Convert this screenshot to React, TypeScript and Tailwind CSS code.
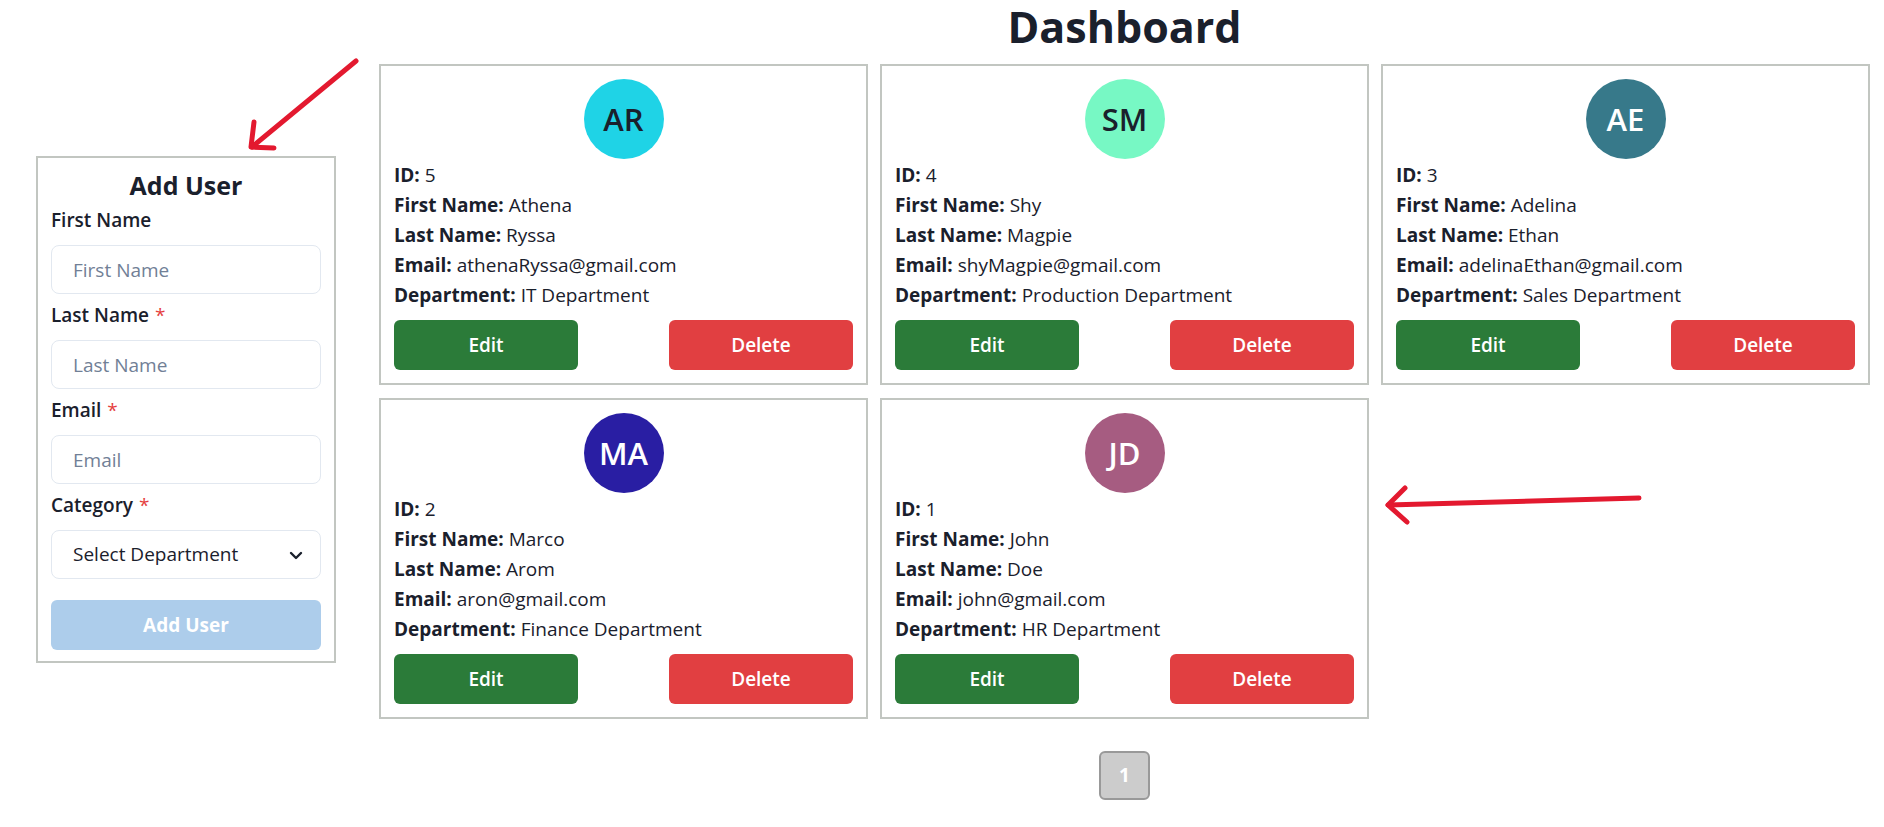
import React from 'react';

type User = {
  id: number;
  firstName: string;
  lastName: string;
  email: string;
  department: string;
  avatarBg: string;
  avatarText: string;
};

const users: User[] = [
  { id: 5, firstName: 'Athena', lastName: 'Ryssa', email: 'athenaRyssa@gmail.com', department: 'IT Department', avatarBg: 'bg-[#1fd3e6]', avatarText: 'text-[#1a202c]' },
  { id: 4, firstName: 'Shy', lastName: 'Magpie', email: 'shyMagpie@gmail.com', department: 'Production Department', avatarBg: 'bg-[#77f8c4]', avatarText: 'text-[#1a202c]' },
  { id: 3, firstName: 'Adelina', lastName: 'Ethan', email: 'adelinaEthan@gmail.com', department: 'Sales Department', avatarBg: 'bg-[#37798a]', avatarText: 'text-white' },
  { id: 2, firstName: 'Marco', lastName: 'Arom', email: 'aron@gmail.com', department: 'Finance Department', avatarBg: 'bg-[#291ea3]', avatarText: 'text-white' },
  { id: 1, firstName: 'John', lastName: 'Doe', email: 'john@gmail.com', department: 'HR Department', avatarBg: 'bg-[#a65c81]', avatarText: 'text-white' },
];

function Field({ label, placeholder, required }: { label: string; placeholder: string; required?: boolean }) {
  return (
    <div className="flex flex-col">
      <label className="text-[19px] leading-[29px] font-semibold mb-[10px]">
        {label}
        {required && <span className="text-[#e53e3e] font-normal ml-[6px]">*</span>}
      </label>
      <input
        placeholder={placeholder}
        className="h-[49px] w-full rounded-lg border border-[#e2e8f0] pl-[21px] text-[19px] placeholder:text-[#718096] outline-none"
      />
    </div>
  );
}

function AddUserForm() {
  return (
    <div className="w-[300px] mt-[156px] border-2 border-[#c2c6c1] px-[13px] pt-[12px] pb-[11px] shrink-0">
      <h2 className="text-center text-[25px] leading-[30px] font-bold mb-[6px]">Add User</h2>
      <div className="flex flex-col gap-[7px]">
        <Field label="First Name" placeholder="First Name" />
        <Field label="Last Name" placeholder="Last Name" required />
        <Field label="Email" placeholder="Email" required />
        <div className="flex flex-col">
          <label className="text-[19px] leading-[29px] font-semibold mb-[10px]">
            Category<span className="text-[#e53e3e] font-normal ml-[6px]">*</span>
          </label>
          <div className="relative">
            <select className="h-[49px] w-full appearance-none rounded-lg border border-[#e2e8f0] bg-white pl-[21px] text-[19px] text-[#1a202c] outline-none">
              <option>Select Department</option>
            </select>
            <svg className="absolute right-[18px] top-[21px] pointer-events-none" width="14" height="9" viewBox="0 0 14 9" fill="none">
              <path d="M2 2l5 5 5-5" stroke="#1a202c" strokeWidth="2.4" strokeLinecap="round" strokeLinejoin="round" />
            </svg>
          </div>
        </div>
      </div>
      <button className="mt-[21px] h-[50px] w-full rounded-md bg-[#adcdeb] text-white text-[19px] font-bold">
        Add User
      </button>
    </div>
  );
}

function UserCard({ user }: { user: User }) {
  const initials = user.firstName[0] + user.lastName[0];
  return (
    <div className="border-2 border-[#c2c6c1] p-[13px] flex flex-col">
      <div className="flex justify-center">
        <div className={`w-[80px] h-[80px] rounded-full flex items-center justify-center text-[31px] font-semibold ${user.avatarBg} ${user.avatarText}`}>
          {initials}
        </div>
      </div>
      <div className="text-[19px] leading-[30px] mt-[1px]">
        <p><b className="font-bold">ID:</b> {user.id}</p>
        <p><b className="font-bold">First Name:</b> {user.firstName}</p>
        <p><b className="font-bold">Last Name:</b> {user.lastName}</p>
        <p><b className="font-bold">Email:</b> {user.email}</p>
        <p><b className="font-bold">Department:</b> {user.department}</p>
      </div>
      <div className="flex justify-between mt-[10px]">
        <button className="w-[184px] h-[50px] rounded-md bg-[#2b7b39] text-white text-[19px] font-semibold">Edit</button>
        <button className="w-[184px] h-[50px] rounded-md bg-[#e13f41] text-white text-[19px] font-semibold">Delete</button>
      </div>
    </div>
  );
}

export default function App() {
  return (
    <div className="relative min-h-[827px] bg-white text-[#1a202c]" style={{ fontFamily: '"Open Sans", "Noto Sans", sans-serif' }}>
      <div className="flex items-start pl-[36px]">
        <AddUserForm />
        <main className="ml-[43px] w-[1491px] flex flex-col items-center">
          <h1 className="text-[43px] leading-[54px] font-bold mb-[10px]">Dashboard</h1>
          <div className="grid grid-cols-[repeat(3,489px)] gap-x-[12px] gap-y-[13px]">
            {users.map((u) => (
              <UserCard key={u.id} user={u} />
            ))}
          </div>
          <div className="mt-[32px] flex gap-2">
            <button className="w-[51px] h-[49px] rounded-md border-2 border-[#999999] bg-[#cccccc] text-white text-[19px] font-bold">
              1
            </button>
          </div>
        </main>
      </div>

      {/* annotation arrows */}
      <svg className="absolute left-0 top-0 pointer-events-none" width="1884" height="827" fill="none">
        <g stroke="#e3192f" strokeWidth="5" strokeLinecap="round" strokeLinejoin="round">
          <path d="M356 61 L252 147" />
          <path d="M254 122 L251 147 L274 148" />
          <path d="M1639 498 L1388 505" />
          <path d="M1405 488 L1388 505 L1407 522" />
        </g>
      </svg>
    </div>
  );
}
